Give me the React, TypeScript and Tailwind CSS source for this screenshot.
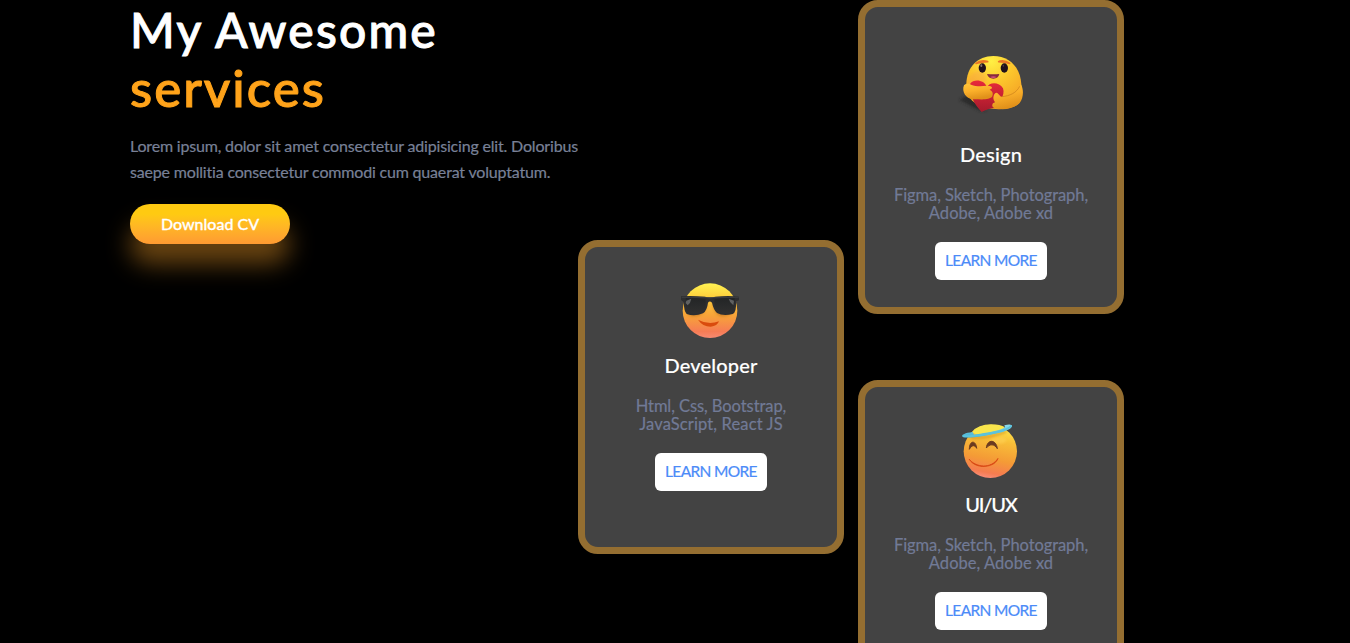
import type { ReactNode } from 'react';

function Hug() {
  return (
    <svg viewBox="-12 0 270 240" className="h-20 w-[90px] shrink-0">
      <defs>
        <radialGradient id="hugFace" cx="0.45" cy="0.1" r="1">
          <stop offset="0" stopColor="#fff044" />
          <stop offset="0.4" stopColor="#fcc62c" />
          <stop offset="0.8" stopColor="#f5a526" />
          <stop offset="1" stopColor="#e88e1c" />
        </radialGradient>
        <linearGradient id="hugArm" x1="0" y1="0" x2="0.3" y2="1">
          <stop offset="0" stopColor="#ffc53a" />
          <stop offset="0.5" stopColor="#fbb02a" />
          <stop offset="1" stopColor="#e0901a" />
        </linearGradient>
        <linearGradient id="hugHeart" x1="0" y1="0" x2="0" y2="1">
          <stop offset="0" stopColor="#e8283a" />
          <stop offset="1" stopColor="#a51a2c" />
        </linearGradient>
        <filter id="hugBlur" x="-30%" y="-30%" width="160%" height="160%">
          <feGaussianBlur stdDeviation="5" />
        </filter>
      </defs>
      <path d="M28 180 L60 160 L110 212 L88 212Z" fill="#202020" opacity="0.7" filter="url(#hugBlur)" />
      <path d="M130 48 C82 48 50 82 49 132 C49 168 62 190 110 204 C146 211 190 208 207 190 C216 176 215 150 214 132 C211 82 178 48 130 48Z" fill="url(#hugFace)" />
      <path d="M55 130 C55 105 78 85 98 95 C120 108 104 142 80 142Z" fill="#f79a50" opacity="0.35" filter="url(#hugBlur)" />
      <path d="M78 70 Q93 59 113 65 Q94 66 78 70Z M146 65 Q163 59 179 70 Q163 66 146 65Z" fill="#e97625" stroke="#e97625" strokeWidth="5" strokeLinejoin="round" />
      <ellipse cx="97" cy="84" rx="11" ry="14" fill="#20111c" />
      <ellipse cx="163" cy="84" rx="11" ry="14" fill="#20111c" />
      <ellipse cx="94" cy="77" rx="3" ry="4" fill="#82756d" />
      <ellipse cx="160" cy="77" rx="2" ry="3" fill="#514247" />
      <path d="M111 102 Q130 104 148 102 Q145 116 130 116 Q115 116 111 102Z" fill="#862b3d" />
      <path d="M120 111 Q130 107 140 111 Q130 117 120 111Z" fill="#d4507a" />
      <path d="M95 216 C73 193 59 170 61 130 C70 117 103 117 111 142 C117 126 147 124 159 145 C167 166 145 193 135 203 C119 205 108 208 95 216Z" fill="url(#hugHeart)" />
      <path d="M42 136 C46 130 55 130 63 134 C79 140 96 139 110 137 Q127 136 126 145 L119 149 Q132 155 127 169 C119 182 90 177 68 178 C48 177 34 154 42 136Z" fill="url(#hugArm)" />
      <path d="M212 132 C222 147 221 174 209 189 C192 207 157 211 137 205 Q122 201 129 190 L135 187 Q127 178 132 164 Q138 154 145 162 L153 170 C181 169 202 157 212 132Z" fill="url(#hugArm)" />
      <path d="M209 139 C200 158 180 168 155 170" stroke="#c77d18" strokeWidth="2" fill="none" />
    </svg>
  );
}

function Cool() {
  return (
    <svg viewBox="-12 0 270 240" className="h-20 w-[90px] shrink-0">
      <defs>
        <linearGradient id="coolFace" x1="0" y1="0" x2="0" y2="1">
          <stop offset="0" stopColor="#fff352" />
          <stop offset="0.25" stopColor="#fdcf3c" />
          <stop offset="0.6" stopColor="#f7a239" />
          <stop offset="0.88" stopColor="#f67c55" />
          <stop offset="1" stopColor="#f78a72" />
        </linearGradient>
        <linearGradient id="coolLens" x1="0" y1="0" x2="0" y2="1">
          <stop offset="0" stopColor="#232526" />
          <stop offset="1" stopColor="#303030" />
        </linearGradient>
        <filter id="coolBlur" x="-30%" y="-50%" width="160%" height="200%">
          <feGaussianBlur stdDeviation="4" />
        </filter>
      </defs>
      <circle cx="120" cy="122" r="82" fill="url(#coolFace)" />
      <path d="M44 95 H110 Q110 139 68 139 Q46 137 44 95Z M128 95 H195 Q192 139 156 139 Q133 137 128 95Z" fill="#a45b18" opacity="0.5" filter="url(#coolBlur)" />
      <path d="M33 79 Q65 77 104 80 Q119 84 138 80 Q176 76 207 80 L207 91 L198 94 Q200 127 188 132 Q160 140 141 129 Q131 120 126 98 Q119 91 114 98 Q111 122 99 130 Q74 140 50 132 Q42 124 41 96 L33 90Z" fill="#2d2e30" />
      <path d="M47 84 Q80 82 107 88 Q109 117 95 126 Q75 134 54 127 Q45 117 47 84Z M133 88 Q161 82 194 84 Q195 118 185 128 Q162 134 146 126 Q132 115 133 88Z" fill="url(#coolLens)" />
      <path d="M49 92 L64 86 Q62 99 53 106 L47 99Z M176 86 L192 92 L190 106 Q179 98 176 86Z" fill="#77797b" opacity="0.7" />
      <path d="M35 82 H105 Q120 86 135 82 H206" fill="none" stroke="#404244" strokeWidth="2.5" />
      <path d="M84 149 Q115 166 147 154 Q142 168 122 170 Q98 170 84 149Z" fill="#d94b0d" />
    </svg>
  );
}

function Angel() {
  return (
    <svg viewBox="-12 0 270 240" className="h-20 w-[90px] shrink-0">
      <defs>
        <linearGradient id="angelFace" x1="0.65" y1="0" x2="0.45" y2="1">
          <stop offset="0" stopColor="#ffe94c" />
          <stop offset="0.3" stopColor="#f8bd38" />
          <stop offset="0.65" stopColor="#f49b36" />
          <stop offset="0.9" stopColor="#f57c50" />
          <stop offset="1" stopColor="#f98c77" />
        </linearGradient>
        <linearGradient id="angelHalo" x1="0" y1="0" x2="0" y2="1">
          <stop offset="0" stopColor="#8bdcf0" />
          <stop offset="1" stopColor="#43afd0" />
        </linearGradient>
        <filter id="angelBlur" x="-30%" y="-50%" width="160%" height="200%">
          <feGaussianBlur stdDeviation="3" />
        </filter>
      </defs>
      <circle cx="121" cy="124" r="80" fill="url(#angelFace)" />
      <ellipse cx="145" cy="91" rx="24" ry="10" fill="#ffd154" opacity="0.6" filter="url(#angelBlur)" />
      <path d="M63 83 Q112 87 169 65" fill="none" stroke="#ce8b20" strokeWidth="7" opacity="0.55" filter="url(#angelBlur)" />
      <path d="M66 66 Q84 43 124 43 Q151 43 165 52 Q142 69 82 75Z" fill="#f9e54c" />
      <path d="M68 66 C44 69 36 74 36 79 C42 88 103 79 142 70 C181 61 190 50 184 45 Q179 42 163 46 L165 52 Q149 64 72 74Z" fill="url(#angelHalo)" />
      <path d="M41 79 Q82 80 140 66 Q179 57 183 48" fill="none" stroke="#5cc3dd" strokeWidth="6" strokeLinecap="round" />
      <path d="M58 118 C58 90 78 90 80 115 C74 103 65 105 58 118Z M109 114 C112 86 139 88 142 116 C133 101 119 101 109 114Z" fill="#6b3b20" stroke="#6b3b20" strokeWidth="3" strokeLinejoin="round" />
      <path d="M57 147 C77 172 123 178 144 145 C137 172 78 182 57 147Z" fill="#d74512" stroke="#d74512" strokeWidth="2" strokeLinejoin="round" />
    </svg>
  );
}

type CardProps = {
  icon: ReactNode;
  title: string;
  titleClass: string;
  lines: { text: string; track: string }[];
  padding: string;
};

function Card({ icon, title, titleClass, lines, padding }: CardProps) {
  return (
    <article className={`flex h-[314px] w-[266px] shrink-0 flex-col items-center rounded-[20px] border-[7px] border-[#946e31] bg-[#434343] ${padding}`}>
      {icon}
      <h2 className={`text-[20px] leading-6 font-medium whitespace-nowrap text-white [-webkit-text-stroke:0.15px] ${titleClass}`}>{title}</h2>
      <p className="mt-5 text-center text-[16.5px] leading-[18px] whitespace-nowrap text-[#717a96] [-webkit-text-stroke:0.2px]">
        {lines.map((line) => (
          <span key={line.text} className={`block ${line.track}`}>{line.text}</span>
        ))}
      </p>
      <button className="mt-5 h-[38px] w-28 shrink-0 rounded-md bg-white text-[15.5px] tracking-[-0.65px] whitespace-nowrap text-[#4b8bf8] [-webkit-text-stroke:0.2px]">LEARN MORE</button>
    </article>
  );
}

const designLines = [
  { text: 'Figma, Sketch, Photograph,', track: 'tracking-[-0.08px]' },
  { text: 'Adobe, Adobe xd', track: 'tracking-[0.03px]' },
];
const devLines = [
  { text: 'Html, Css, Bootstrap,', track: 'tracking-[-0.08px]' },
  { text: 'JavaScript, React JS', track: 'tracking-[0.12px]' },
];

export default function App() {
  return (
    <main className="flex h-[643px] w-full items-start overflow-hidden bg-black pl-[130px] font-['Lato',sans-serif]">
      <section className="w-[448px] shrink-0">
        <h1 className="text-[48px] leading-[59px] font-medium whitespace-nowrap text-white [-webkit-text-stroke:1px]">
          <span className="block tracking-[2.2px]">My Awesome</span>
          <span className="block text-[51px] leading-[57px] tracking-[2px] text-[#ffa31a]">services</span>
        </h1>
        <p className="mt-[17px] text-[16px] leading-[26px] tracking-[-0.18px] whitespace-nowrap text-[#788097] [-webkit-text-stroke:0.2px]">
          <span className="block">Lorem ipsum, dolor sit amet consectetur adipisicing elit. Doloribus</span>
          <span className="block">saepe mollitia consectetur commodi cum quaerat voluptatum.</span>
        </p>
        <button className="mt-[19px] h-10 w-40 rounded-full bg-linear-to-b from-[#ffca11] from-25% to-[#ff9a32] text-[16px] font-medium whitespace-nowrap text-white shadow-[0_20px_24px_rgba(251,161,40,0.42)] [-webkit-text-stroke:0.3px]">Download CV</button>
      </section>
      <section className="flex shrink-0 items-start gap-3.5">
        <div className="pt-60">
          <Card icon={<Cool />} title="Developer" titleClass="mt-[3px] tracking-[0.2px]" lines={devLines} padding="pt-[23px]" />
        </div>
        <div className="flex flex-col gap-[66px]">
          <Card icon={<Hug />} title="Design" titleClass="mt-[22px] tracking-[0.2px]" lines={designLines} padding="pt-[33px]" />
          <Card icon={<Angel />} title="UI/UX" titleClass="mt-0.5 tracking-[-1.2px]" lines={designLines} padding="pt-[23px]" />
        </div>
      </section>
    </main>
  );
}
